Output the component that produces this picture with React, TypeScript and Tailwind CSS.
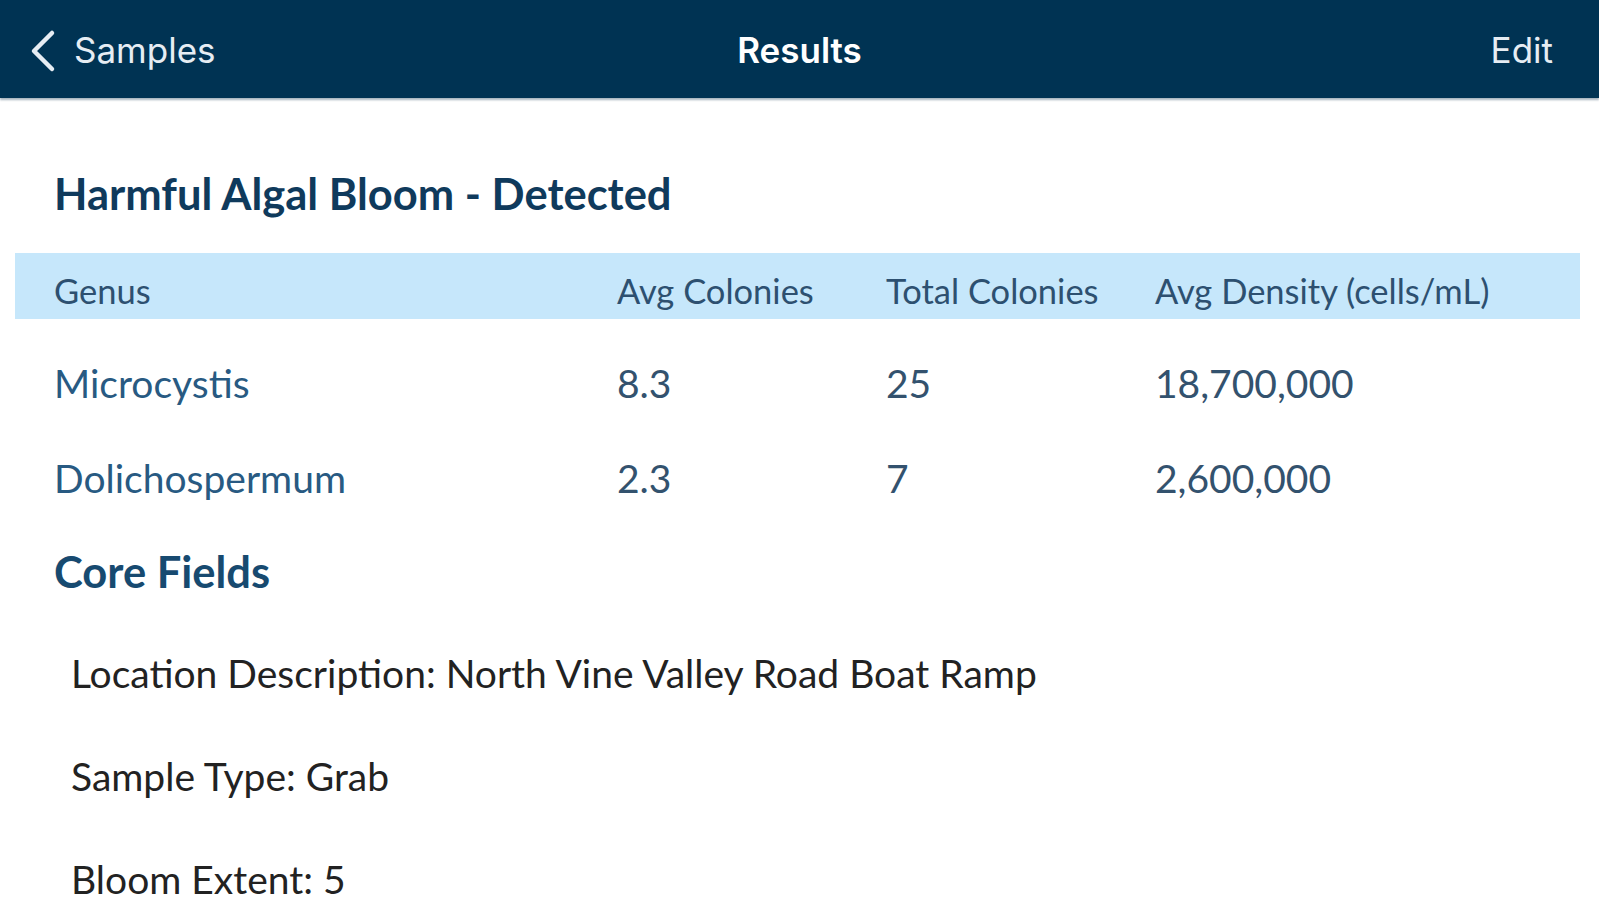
import React from "react";

// --- Dados da tabela ---
interface GenusRow {
  genus: string;
  avg: string;
  total: string;
  density: string;
}

const rows: GenusRow[] = [
  { genus: "Microcystis", avg: "8.3", total: "25", density: "18,700,000" },
  { genus: "Dolichospermum", avg: "2.3", total: "7", density: "2,600,000" },
];

const coreFields = [
  "Location Description: North Vine Valley Road Boat Ramp",
  "Sample Type: Grab",
  "Bloom Extent: 5",
];

const gridCols = "grid grid-cols-[563px_269px_269px_1fr] items-center";

const App = () => {
  return (
    <div className="min-h-screen bg-white font-['Lato',sans-serif] overflow-hidden">
      {/* Navbar */}
      <header className="h-[98px] bg-[#003353] flex items-center justify-between pl-[30px] pr-[30px] pt-[3px] shadow-[0_2px_2px_rgba(0,40,70,0.35)] font-['Inter',sans-serif] text-[35px]">
        <div className="flex items-center gap-[18px] text-[#e6edf3] w-[300px]">
          <svg width="26" height="44" viewBox="0 0 26 44" fill="none">
            <path
              d="M22 4 L4 22 L22 40"
              stroke="#e6edf3"
              strokeWidth="4.5"
              strokeLinecap="round"
              strokeLinejoin="round"
            />
          </svg>
          <span>Samples</span>
        </div>
        <div className="text-white font-semibold">Results</div>
        <div className="w-[300px] text-right text-[#e6edf3] pr-[16px]">Edit</div>
      </header>

      {/* Conteúdo */}
      <main>
        <h1 className="h-[155px] pt-[37px] flex items-center pl-[54px] text-[43.5px] font-bold text-[#0f3a5c]">
          Harmful Algal Bloom - Detected
        </h1>

        {/* Tabela */}
        <div className="ml-[15px] mr-[19px]">
          <div
            className={`${gridCols} h-[66px] bg-[#c6e7fb] pl-[39px] pt-[10px] text-[34.5px] text-[#2d5070]`}
          >
            <div>Genus</div>
            <div>Avg Colonies</div>
            <div>Total Colonies</div>
            <div>Avg Density (cells/mL)</div>
          </div>
          <div className="pt-[17px]">
            {rows.map((r) => (
              <div
                key={r.genus}
                className={`${gridCols} h-[95px] pl-[39px] text-[39px] text-[#33526e]`}
              >
                <div className="text-[#285a82]">{r.genus}</div>
                <div>{r.avg}</div>
                <div>{r.total}</div>
                <div>{r.density}</div>
              </div>
            ))}
          </div>
        </div>

        <h2 className="h-[92px] flex items-center pl-[54px] text-[43.5px] font-bold text-[#174a70]">
          Core Fields
        </h2>

        <div className="pl-[71px] pt-[4px]">
          {coreFields.map((f) => (
            <div
              key={f}
              className="h-[103px] flex items-center text-[39px] text-[#222222]"
            >
              {f}
            </div>
          ))}
        </div>
      </main>
    </div>
  );
};

export default App;
